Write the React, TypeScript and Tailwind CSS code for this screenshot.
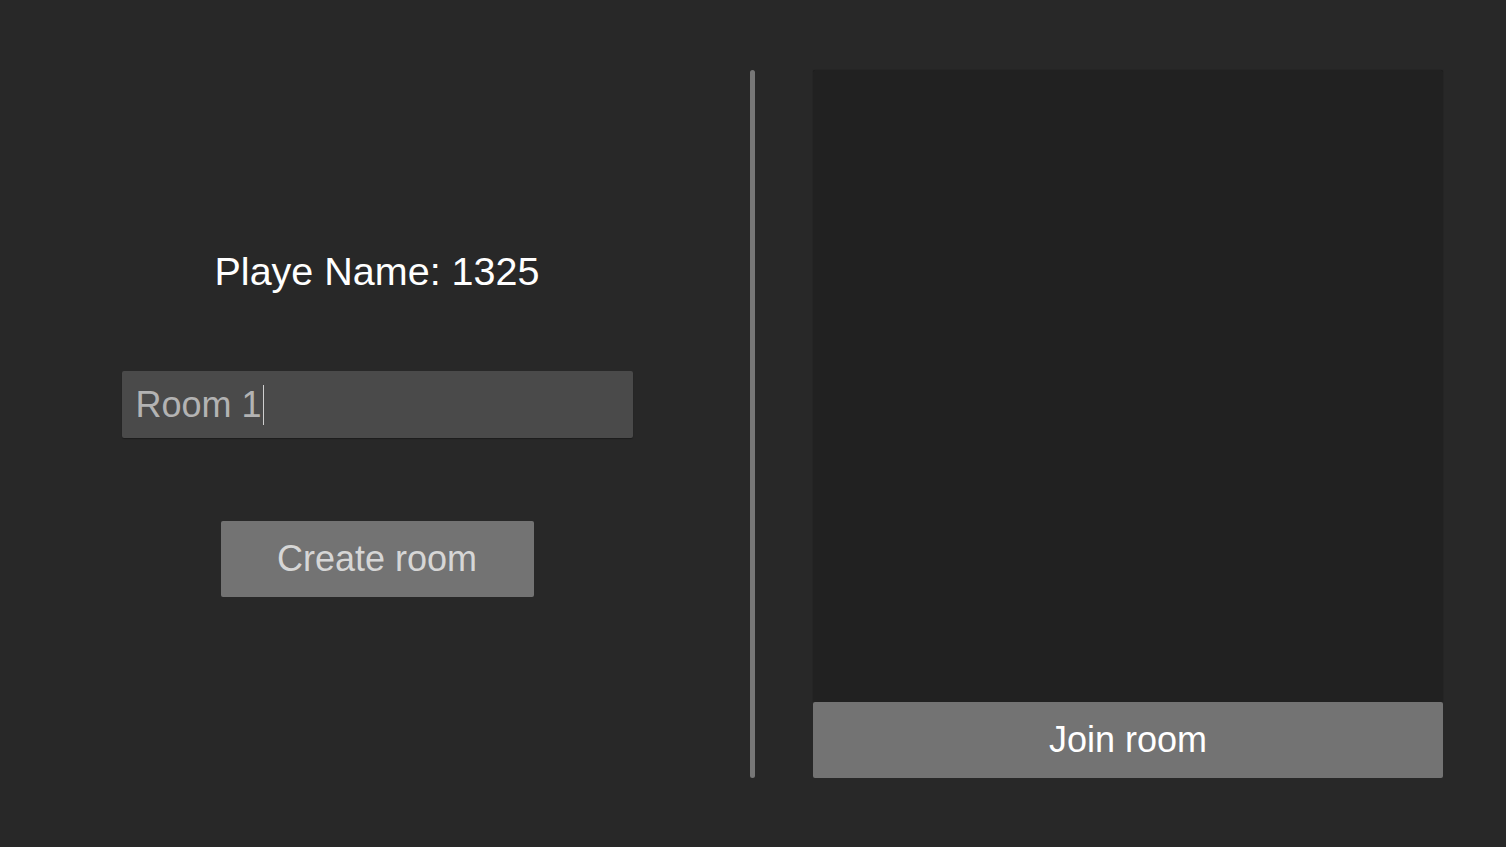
export default function App() {
  return (
    <div
      className="w-[1506px] h-[847px] bg-[#282828] flex flex-row pt-[70px] pb-[69px] overflow-hidden"
      style={{ fontFamily: '"Liberation Sans", Arial, sans-serif' }}
    >
      <div className="w-[750px] pl-[4px] flex flex-col items-center">
        <div className="mt-[177px] h-[48px] leading-[48px] text-[39.5px] text-white">Playe Name: 1325</div>
        <div className="mt-[76px] w-[511px] h-[67px] bg-[#4a4a4a] rounded-[2px] flex items-center pl-[14px] shadow-[0_1px_1px_rgba(0,0,0,0.3)]">
          <span className="text-[36px] text-[#b3b3b3]">Room 1</span>
          <span className="ml-[1px] w-[1px] h-[40px] bg-[#cfcfcf]"></span>
        </div>
        <div className="mt-[83px] w-[313px] h-[76px] bg-[#737373] rounded-[2px] flex items-center justify-center text-[36px] text-[#d6d6d6]">
          Create room
        </div>
      </div>
      <div className="w-[5px] bg-[#777777] rounded-full"></div>
      <div className="ml-[58px] w-[630px] flex flex-col">
        <div className="flex-1 bg-[#212121] rounded-t-[2px] shadow-[0_0_1px_rgba(0,0,0,0.6)]"></div>
        <div className="h-[76px] bg-[#737373] rounded-[2px] flex items-center justify-center text-[36px] text-white">
          Join room
        </div>
      </div>
    </div>
  );
}
